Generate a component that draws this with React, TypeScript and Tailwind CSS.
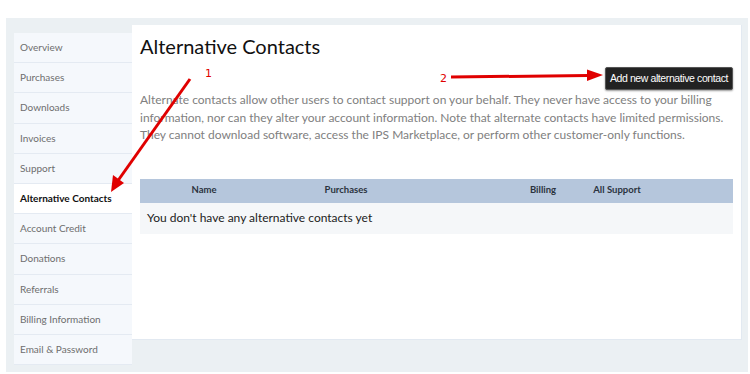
import React from "react";

const navItems = [
  "Overview",
  "Purchases",
  "Downloads",
  "Invoices",
  "Support",
  "Alternative Contacts",
  "Account Credit",
  "Donations",
  "Referrals",
  "Billing Information",
  "Email & Password",
];

function Annotations() {
  return (
    <svg
      className="absolute inset-0 pointer-events-none"
      width="750"
      height="374"
      viewBox="0 0 750 374"
    >
      <line x1="190" y1="79" x2="117" y2="182" stroke="#e00000" strokeWidth="3" />
      <polygon points="111,192 113,175 124,183" fill="#e00000" />
      <line x1="451" y1="77" x2="588" y2="75.5" stroke="#e00000" strokeWidth="3" />
      <polygon points="603,75 587,69.5 587,81" fill="#e00000" />
    </svg>
  );
}

export default function App() {
  return (
    <div className="relative w-[750px] h-[374px] bg-white overflow-hidden font-['Lato',sans-serif]">
      <div className="absolute left-[6px] top-[18px] right-[2px] bottom-[2px] bg-[#ebf0f3]" />
      <div className="relative flex items-start pt-[25px] pl-[14px]">
        <nav className="mt-[8px] w-[118px] flex flex-col">
          {navItems.map((item) => {
            const active = item === "Alternative Contacts";
            return (
              <div
                key={item}
                className={
                  active
                    ? "h-[30.2px] flex items-center pl-[6px] bg-white border-b border-[#e4eaf2] text-[10px] font-bold text-[#111]"
                    : "h-[30.2px] flex items-center pl-[6px] bg-[#f5f8fc] border-b border-[#e4eaf2] text-[10px] text-[#6e6e6e]"
                }
              >
                {item}
              </div>
            );
          })}
        </nav>
        <main className="w-[610px] h-[315px] bg-white border-b border-r border-[#e2e9f1] px-2 pt-[6px]">
          <h1 className="text-[20px] leading-[30px] text-[#111]">Alternative Contacts</h1>
          <div className="flex justify-end mt-[6px]">
            <button className="h-[23px] w-[128px] rounded-[2px] bg-[#222] border border-[#555] text-white text-[10.5px] whitespace-nowrap font-['Liberation_Sans',sans-serif] tracking-[-0.4px] shadow-[0_1px_2px_rgba(0,0,0,0.4)]">
              Add new alternative contact
            </button>
          </div>
          <p className="mt-[1px] w-[594px] text-[12px] leading-[17.5px] text-[#808080]">
            Alternate contacts allow other users to contact support on your behalf. They never have access to your billing information, nor can they alter your account information. Note that alternate contacts have limited permissions. They cannot download software, access the IPS Marketplace, or perform other customer-only functions.
          </p>
          <div className="mt-[35px]">
            <div className="h-[24px] bg-[#b5c6dc] flex items-center text-[9.5px] font-bold text-[#2b3340]">
              <span className="w-[128px] text-center">Name</span>
              <span className="w-[156px] text-center">Purchases</span>
              <span className="ml-[89px] w-[60px] text-center">Billing</span>
              <span className="ml-[9px] w-[70px] text-center">All Support</span>
            </div>
            <div className="h-[31px] bg-[#f5f7f9] flex items-center pl-[7px] text-[12px] text-[#222]">
              You don't have any alternative contacts yet
            </div>
          </div>
        </main>
      </div>
      <span className="absolute left-[205px] top-[66px] text-[11px] text-[#e00000] font-['DejaVu_Sans',sans-serif]">1</span>
      <span className="absolute left-[440px] top-[71px] text-[11px] text-[#e00000] font-['DejaVu_Sans',sans-serif]">2</span>
      <Annotations />
    </div>
  );
}
